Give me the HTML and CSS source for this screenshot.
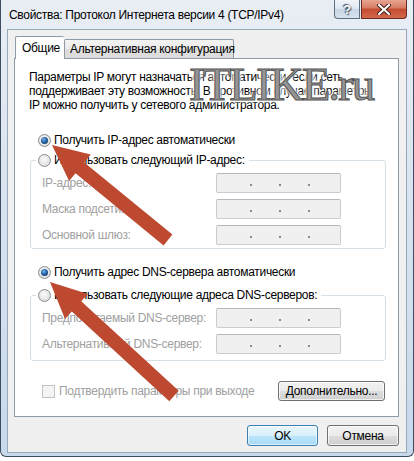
FILE: index.html
```html
<!DOCTYPE html>
<html lang="ru">
<head>
<meta charset="utf-8">
<title>Свойства: Протокол Интернета версии 4 (TCP/IPv4)</title>
<link rel="stylesheet" href="styles.css">
</head>
<body>
<div class="window">
  <div class="titlebar">
    <span class="title">Свойства: Протокол Интернета версии 4 (TCP/IPv4)</span>
    <div class="caption-btns">
      <div class="cbtn help">?</div>
      <div class="cbtn close">
        <svg width="14" height="11" viewBox="0 0 14 11"><path d="M2 1 L12 10 M12 1 L2 10" stroke="#3b1a14" stroke-width="4" stroke-linecap="round"/><path d="M2 1 L12 10 M12 1 L2 10" stroke="#ffffff" stroke-width="2.2" stroke-linecap="round"/></svg>
      </div>
    </div>
  </div>
  <div class="client">
    <div class="tabs">
      <div class="tab active">Общие</div>
      <div class="tab">Альтернативная конфигурация</div>
    </div>
    <div class="panel">
      <p class="intro">Параметры IP могут назначаться автоматически, если сеть<br>поддерживает эту возможность. В противном случае параметры<br>IP можно получить у сетевого администратора.</p>
      <div class="opt first"><span class="radio checked"></span>Получить IP-адрес автоматически</div>
      <fieldset class="group g1">
        <legend><span class="radio"></span>Использовать следующий IP-адрес:</legend>
        <div class="field"><span class="lbl">IP-адрес:</span><div class="ipbox"><i></i><i></i><i></i></div></div>
        <div class="field"><span class="lbl">Маска подсети:</span><div class="ipbox"><i></i><i></i><i></i></div></div>
        <div class="field"><span class="lbl">Основной шлюз:</span><div class="ipbox"><i></i><i></i><i></i></div></div>
      </fieldset>
      <div class="opt second"><span class="radio checked"></span>Получить адрес DNS-сервера автоматически</div>
      <fieldset class="group g2">
        <legend><span class="radio"></span>Использовать следующие адреса DNS-серверов:</legend>
        <div class="field"><span class="lbl">Предпочитаемый DNS-сервер:</span><div class="ipbox"><i></i><i></i><i></i></div></div>
        <div class="field"><span class="lbl">Альтернативный DNS-сервер:</span><div class="ipbox"><i></i><i></i><i></i></div></div>
      </fieldset>
      <div class="bottom-row">
        <div class="check"><span class="box"></span>Подтвердить параметры при выходе</div>
        <div class="btn adv">Дополнительно...</div>
      </div>
    </div>
    <div class="footer">
      <div class="btn ok">OK</div>
      <div class="btn cancel">Отмена</div>
    </div>
  </div>
  <div class="watermark">ITLIKE.ru</div>
  <svg class="arrows" width="414" height="461" viewBox="0 0 414 461">
    <g fill="#bd4a30">
      <polygon points="52,145 90.7,154.6 84.3,162.4 172.4,234.6 163.6,245.4 75.5,173.2 69.1,181"/>
      <polygon points="50,282 88,293.9 81.2,301.2 178.7,390.8 169.3,401.2 71.8,311.6 65,318.9"/>
    </g>
  </svg>
</div>
</body>
</html>
```
FILE: styles.css
```css
* { box-sizing: border-box; }
html, body { margin: 0; padding: 0; }
body {
  background: #ffffff;
  font-family: "Liberation Sans", Arial, sans-serif;
  font-size: 12px;
  letter-spacing: -0.3px;
  color: #000;
  width: 414px;
  height: 461px;
  overflow: hidden;
}
.window {
  position: relative;
  width: 414px;
  height: 457px;
  border: 1px solid #3d4c5e;
  border-top: none;
  border-radius: 0 0 6px 6px;
  padding: 0 6px 3px 6px;
  background: linear-gradient(180deg, #e9eef4 0%, #d9e4f0 40%, #c8d9ec 100%);
  display: flex;
  flex-direction: column;
}
.titlebar {
  height: 29px;
  display: flex;
  justify-content: space-between;
  align-items: flex-start;
}
.title {
  padding: 8px 0 0 2px;
  line-height: 14px;
  color: #000;
  white-space: nowrap;
}
.caption-btns {
  display: flex;
  gap: 1px;
}
.cbtn {
  height: 19px;
  border: 1px solid #5f6f82;
  border-top: none;
  display: flex;
  align-items: center;
  justify-content: center;
}
.cbtn.help {
  width: 26px;
  border-radius: 0 0 0 4px;
  background: linear-gradient(180deg, #f2f5f9 0%, #dde6f0 50%, #c9d6e5 51%, #d7e2ee 100%);
  color: #fff;
  font-weight: bold;
  font-size: 13px;
  text-shadow: 0 0 1px #44546a, 1px 1px 1px #44546a, -1px -1px 1px #44546a;
}
.cbtn.close {
  width: 46px;
  border-color: #6a2a1e;
  border-radius: 0 0 4px 0;
  background: linear-gradient(180deg, #e8a592 0%, #d77a62 45%, #c44a2f 50%, #d26a4c 100%);
}
.client {
  flex: 1;
  border: 1px solid #98a8bb;
  background: #f0f0f0;
  display: flex;
  flex-direction: column;
}
.tabs {
  display: flex;
  align-items: flex-end;
  height: 28px;
  padding-left: 7px;
  position: relative;
  z-index: 1;
}
.tab {
  height: 19px;
  border: 1px solid #8e9aa8;
  border-bottom: none;
  padding: 0 5px;
  line-height: 18px;
  background: linear-gradient(180deg, #f4f4f4 0%, #ebebeb 50%, #dedede 51%, #dcdcdc 100%);
  border-radius: 2px 2px 0 0;
  white-space: nowrap;
}
.tab.active {
  height: 23px;
  width: 49px;
  margin-bottom: -1px;
  background: #ffffff;
  border-right: none;
  line-height: 22px;
  padding: 0 0 0 6px;
}
.tab:not(.active) { width: 170px; }
.panel {
  width: 385px;
  height: 359px;
  margin-left: 6px;
  border: 1px solid #8e9aa8;
  background: #ffffff;
  padding: 11px 13px 0 14px;
}
.intro {
  margin: 0;
  line-height: 14px;
  white-space: nowrap;
}
.opt {
  display: flex;
  align-items: center;
  height: 16px;
  padding-left: 9px;
  gap: 3px;
}
.opt.first { margin-top: 20px; }
.opt.second { margin-top: 15px; }
.radio {
  width: 13px;
  height: 13px;
  border-radius: 50%;
  border: 1px solid #8a8d90;
  background: radial-gradient(circle at 45% 40%, #fbfbfb 0%, #e4e4e4 60%, #cfcfcf 100%);
  display: inline-flex;
  align-items: center;
  justify-content: center;
  flex: none;
}
.radio.checked::after {
  content: "";
  width: 7px;
  height: 7px;
  border-radius: 50%;
  background: radial-gradient(circle at 40% 35%, #7fb6e6 0%, #2a6bb0 40%, #123a6c 80%, #0c2547 100%);
}
.group {
  margin: 4px 0 0 1px;
  width: 356px;
  border: 1px solid #d5dfe5;
  border-radius: 3px;
  padding: 0 0 3px 11px;
  min-width: 0;
}
.group legend {
  display: flex;
  align-items: center;
  height: 16px;
  gap: 3px;
  padding: 0 4px 0 2px;
  margin-left: -6px;
}
.g2 { margin-top: 7px; padding-bottom: 6px; }
.field {
  display: flex;
  align-items: center;
  height: 20px;
  margin-top: 6px;
}
.field:first-of-type { margin-top: 5px; }
.lbl {
  width: 174px;
  color: #a0a0a0;
}
.ipbox {
  width: 125px;
  height: 20px;
  border: 1px solid #c9ccd0;
  border-top-color: #b5b8bd;
  border-radius: 2px;
  background: #f0f0f0;
  display: flex;
  align-items: center;
  padding: 4px 0 0 33px;
  gap: 27px;
}
.ipbox i {
  width: 2px;
  height: 2px;
  background: #8c8c8c;
}
.bottom-row {
  display: flex;
  align-items: center;
  justify-content: space-between;
  margin-top: 20px;
  height: 20px;
}
.check {
  display: flex;
  align-items: center;
  gap: 4px;
  padding-left: 13px;
  color: #a0a0a0;
}
.check .box {
  width: 13px;
  height: 13px;
  border: 1px solid #c2c2c2;
  background: #f4f4f4;
}
.btn {
  display: flex;
  align-items: center;
  justify-content: center;
  border: 1px solid #707070;
  border-radius: 3px;
  background: linear-gradient(180deg, #f2f2f2 0%, #ebebeb 50%, #dddddd 51%, #cfcfcf 100%);
  box-shadow: inset 0 0 0 1px rgba(255,255,255,0.7);
}
.btn.adv { width: 107px; height: 20px; }
.footer {
  display: flex;
  justify-content: flex-end;
  gap: 9px;
  margin-top: 8px;
  padding-right: 7px;
}
.btn.ok {
  width: 71px;
  height: 21px;
  border-color: #3c7fb1;
  background: linear-gradient(180deg, #eaf6fd 0%, #d9f0fc 50%, #bee6fd 51%, #a7d9f5 100%);
  box-shadow: inset 0 0 0 1px rgba(255,255,255,0.6);
}
.btn.cancel { width: 72px; height: 21px; }
.watermark {
  position: absolute;
  left: 188px;
  top: 61px;
  font-family: "Liberation Serif", "Times New Roman", serif;
  font-size: 47px;
  line-height: 47px;
  letter-spacing: -2px;
  color: #959595;
  -webkit-text-stroke: 1px #555;
  text-shadow: 0 0 3px #fff, 0 0 4px #fff, 0 0 6px #fff;
  pointer-events: none;
}
.arrows {
  position: absolute;
  left: -1px;
  top: 0;
  pointer-events: none;
}
```
